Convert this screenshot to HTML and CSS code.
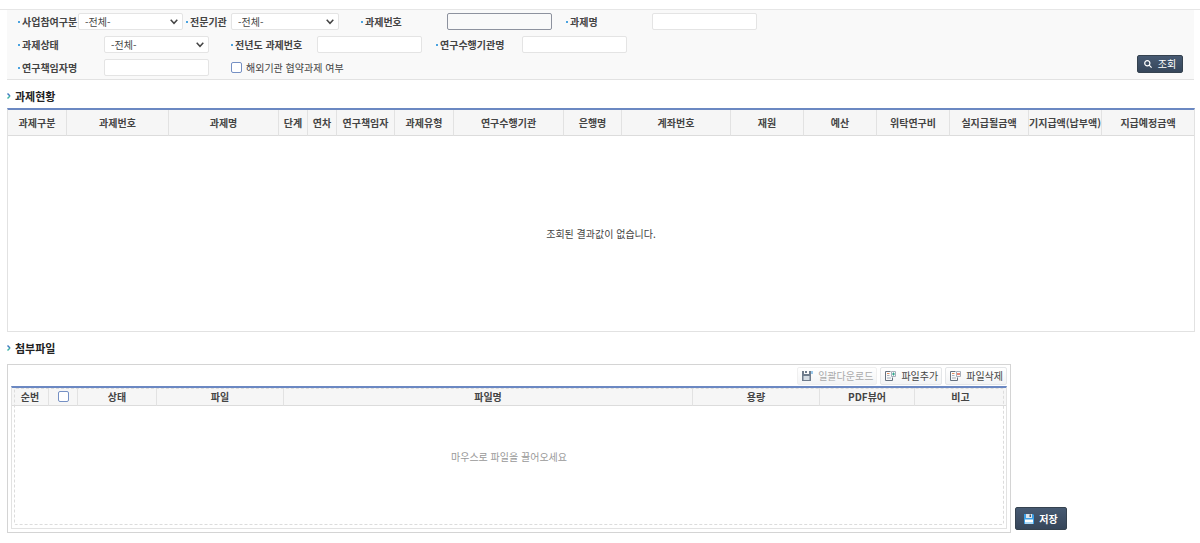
FILE: index.html
```html
<!DOCTYPE html>
<html lang="ko">
<head>
<meta charset="utf-8">
<title>과제현황</title>
<link rel="stylesheet" href="styles.css">
</head>
<body>
<main class="page">
  <form class="search">
    <div class="rows">
      <div class="row">
        <div class="field"><label class="label label-s" for="f1">사업참여구분</label><select class="control" id="f1"><option>-전체-</option></select></div>
        <div class="field gap-xs"><label class="label label-xs" for="f2">전문기관</label><select class="control control-l" id="f2"><option>-전체-</option></select></div>
        <div class="field gap-l"><label class="label" for="f3">과제번호</label><input class="control control-active" id="f3" type="text"></div>
        <div class="field gap-m"><label class="label" for="f4">과제명</label><input class="control" id="f4" type="text"></div>
      </div>
      <div class="row">
        <div class="field"><label class="label" for="f5">과제상태</label><select class="control" id="f5"><option>-전체-</option></select></div>
        <div class="field gap-l"><label class="label" for="f6">전년도 과제번호</label><input class="control" id="f6" type="text"></div>
        <div class="field gap-m"><label class="label" for="f7">연구수행기관명</label><input class="control" id="f7" type="text"></div>
      </div>
      <div class="row">
        <div class="field"><label class="label" for="f8">연구책임자명</label><input class="control" id="f8" type="text"></div>
        <div class="field gap-l"><input class="check" id="f9" type="checkbox"><label class="check-label" for="f9">해외기관 협약과제 여부</label></div>
      </div>
    </div>
    <button class="btn-dark btn-search" type="button">
      <svg width="8" height="8" viewBox="0 0 8 8" fill="none" stroke="#fff" stroke-width="1.2"><circle cx="3.3" cy="3.3" r="2.6"/><path d="M5.2 5.2 7.6 7.6"/></svg>
      조회
    </button>
  </form>

  <section>
    <h2 class="title"><svg class="chev" width="4" height="6" viewBox="0 0 4 6" fill="none" stroke-width="1.4"><path d="M.5.5 3 3" stroke="#3f78c0"/><path d="M3 3 .5 5.5" stroke="#3fb3a5"/></svg>과제현황</h2>
    <table class="grid">
      <colgroup>
        <col class="w59"><col class="w102"><col class="w110"><col class="w29"><col class="w29"><col class="w58"><col class="w59"><col class="w110"><col class="w58"><col class="w109"><col class="w73"><col class="w73"><col class="w73"><col class="w79"><col class="w73"><col class="w92">
      </colgroup>
      <thead>
        <tr><th>과제구분</th><th>과제번호</th><th>과제명</th><th>단계</th><th>연차</th><th>연구책임자</th><th>과제유형</th><th>연구수행기관</th><th>은행명</th><th>계좌번호</th><th>재원</th><th>예산</th><th>위탁연구비</th><th>실지급될금액</th><th>기지급액(납부액)</th><th>지급예정금액</th></tr>
      </thead>
      <tbody><tr><td class="empty" colspan="16">조회된 결과값이 없습니다.</td></tr></tbody>
    </table>
  </section>

  <section>
    <h2 class="title title-files"><svg class="chev" width="4" height="6" viewBox="0 0 4 6" fill="none" stroke-width="1.4"><path d="M.5.5 3 3" stroke="#3f78c0"/><path d="M3 3 .5 5.5" stroke="#3fb3a5"/></svg>첨부파일</h2>
    <div class="files-row">
      <div class="files">
        <div class="toolbar">
          <button class="tool" type="button" disabled>
            <svg width="11" height="10" viewBox="0 0 11 10"><path d="M0 0h2v3h5V0h2v10H0z" fill="#6f7c8c"/><path d="M3 0h2v2H3z" fill="#6f7c8c"/><path d="M1.500 5h6v4h-6z" fill="#d5dde4"/><path d="M10 0v3" stroke="#5aa7e0" stroke-width="1.200"/></svg>
            일괄다운로드
          </button>
          <button class="tool" type="button">
            <svg width="11" height="10" viewBox="0 0 11 10" fill="none"><path d="M5.500.5h-5v9h7V6.500" stroke="#66717e"/><path d="M6.500.5h4v5h-4z" stroke="#a6afba"/><path d="M8.500 1.500v3M7 3h3" stroke="#2fa58c"/><path d="M2 2.500h2.500" stroke="#e2905f"/><path d="M2 4.500h2.500M2 7h4" stroke="#a6afba"/></svg>
            파일추가
          </button>
          <button class="tool" type="button">
            <svg width="11" height="10" viewBox="0 0 11 10" fill="none"><path d="M5.500.5h-5v9h7V6.500" stroke="#66717e"/><path d="M6.500.5h4v5h-4z" stroke="#a6afba"/><path d="M7 3h3" stroke="#e0604f" stroke-width="1.500"/><path d="M2 2.500h2.500" stroke="#e2905f"/><path d="M2 4.500h2.500M2 7h4" stroke="#a6afba"/></svg>
            파일삭제
          </button>
        </div>
        <div class="drop">
          <table class="grid grid-files">
            <colgroup><col class="w37"><col class="w29"><col class="w79"><col class="w127"><col class="w409"><col class="w127"><col class="w95"><col class="w91"></colgroup>
            <thead>
              <tr><th>순번</th><th><input class="check" type="checkbox" aria-label="전체 선택"></th><th>상태</th><th>파일</th><th>파일명</th><th>용량</th><th>PDF뷰어</th><th>비고</th></tr>
            </thead>
            <tbody><tr><td class="hint" colspan="8">마우스로 파일을 끌어오세요</td></tr></tbody>
          </table>
          <div class="drop-outline"></div>
        </div>
      </div>
      <button class="btn-dark btn-save" type="button">
        <svg width="10" height="10" viewBox="0 0 10 10"><path d="M0 0h9l1 1v9H0z" fill="#3d9fe6"/><path d="M2 0h6v4H2z" fill="#dfe5ea"/><path d="M5.500.5H7V3H5.500z" fill="#4a5a6c"/><path d="M1 5.500h8V8H1z" fill="#fff"/><path d="M1 8h8v2H1z" fill="#a9d8f7"/></svg>
        저장
      </button>
    </div>
  </section>
</main>
</body>
</html>
```
FILE: styles.css
```css
* { box-sizing: border-box; }

body {
  margin: 0;
  padding-top: 9px;
  background: #fff;
  color: #444;
  font: 10px/14px "Noto Sans CJK KR", "Noto Sans", sans-serif;
}

button, input, select { font: inherit; color: inherit; margin: 0; }

.page { border-top: 1px solid #e6e6e6; padding: 0 6px 0 7px; }

/* search form */
.search {
  display: flex;
  justify-content: space-between;
  align-items: flex-end;
  padding: 3px 11px 3px 11px;
  background: #f9f9f9;
  border-bottom: 1px solid #e2e2e2;
}
.rows { display: flex; flex-direction: column; gap: 6px; }
.row, .field { display: flex; align-items: center; }
.gap-xs { margin-left: 3px; }
.gap-m { margin-left: 14px; }
.gap-l { margin-left: 22px; }

.label {
  display: flex;
  align-items: center;
  gap: 2px;
  width: 86px;
  font-weight: 700;
  white-space: nowrap;
}
.label::before { content: ""; width: 2px; height: 2px; background: #4aa3e0; }
.label-s { width: 60px; }
.label-xs { width: 45px; }

.control {
  width: 105px;
  height: 17px;
  padding: 0 6px;
  background: #fff;
  border: 1px solid #e4e4e4;
  border-radius: 2px;
  line-height: 15px;
}
.control-l { width: 108px; }
.control-active { background: #f9f9f9; border-color: #8d929e; }

select.control {
  appearance: none;
  background: #fff url("data:image/svg+xml,%3Csvg xmlns='http://www.w3.org/2000/svg' width='8' height='6' fill='none' stroke='%23444' stroke-width='1.5'%3E%3Cpath d='M.7.8 4 4.300 7.300.8'/%3E%3C/svg%3E") no-repeat right 4px center;
}

.check {
  appearance: none;
  flex: none;
  width: 11px;
  height: 11px;
  background: #fff;
  border: 1px solid #7590c4;
  border-radius: 2px;
}
.check-label { margin-left: 4px; }

.btn-dark {
  display: flex;
  flex: none;
  align-items: center;
  justify-content: center;
  background: linear-gradient(#475a72, #36465a);
  border: 1px solid #35424f;
  border-radius: 2px;
  color: #fff;
  padding: 0;
}
.btn-search { gap: 6px; width: 46px; height: 18px; margin-bottom: 3px; }
.btn-save { gap: 5px; width: 52px; height: 23px; margin-bottom: 3px; font-weight: 700; }

/* section titles */
.title {
  display: flex;
  align-items: center;
  gap: 4px;
  margin: 0;
  padding: 8px 0 4px;
  color: #222;
  font-size: 11px;
  line-height: 16px;
}
.title-files { padding-bottom: 8px; }

/* tables */
.grid {
  width: 100%;
  table-layout: fixed;
  border-collapse: separate;
  border-spacing: 0;
  border: 1px solid #e2e2e2;
  border-top: 2px solid #6b88c2;
}
.grid th {
  height: 26px;
  padding: 0;
  background: #f6f6f6;
  border-right: 1px solid #e2e2e2;
  border-bottom: 1px solid #dcdcdc;
  font-weight: 700;
  white-space: nowrap;
}
.grid th:last-child { border-right: 0; }
.grid td { padding: 0; text-align: center; }
.grid .empty { height: 195px; }

.w29 { width: 29px; }
.w37 { width: 37px; }
.w58 { width: 58px; }
.w59 { width: 59px; }
.w73 { width: 73px; }
.w79 { width: 79px; }
.w91 { width: 91px; }
.w92 { width: 92px; }
.w95 { width: 95px; }
.w102 { width: 102px; }
.w109 { width: 109px; }
.w110 { width: 110px; }
.w127 { width: 127px; }
.w409 { width: 409px; }

/* attachments */
.files-row { display: flex; align-items: flex-end; gap: 4px; max-width: 1060px; }
.files { flex: 1; padding: 2px 3px 3px; border: 1px solid #d4d4d4; }
.toolbar { display: flex; justify-content: flex-end; gap: 3px; padding-bottom: 1px; }
.tool {
  display: flex;
  align-items: center;
  gap: 5px;
  height: 18px;
  padding: 0 3px 0 4px;
  background: linear-gradient(#fff, #f3f4f5);
  border: 1px solid #e4e6e8;
  border-radius: 2px;
}
.tool:disabled { color: #aaa; border-color: #f0f0f0; }

.drop { position: relative; }
.grid-files th { height: 18px; line-height: 13px; }
.grid-files .check { display: block; margin: 0 auto; }
.grid-files .hint { height: 122px; padding-bottom: 20px; color: #999; }
.drop-outline {
  position: absolute;
  inset: 2px 3px 4px;
  border: 1px dashed #dcdcdc;
  border-radius: 2px;
  pointer-events: none;
}
```
